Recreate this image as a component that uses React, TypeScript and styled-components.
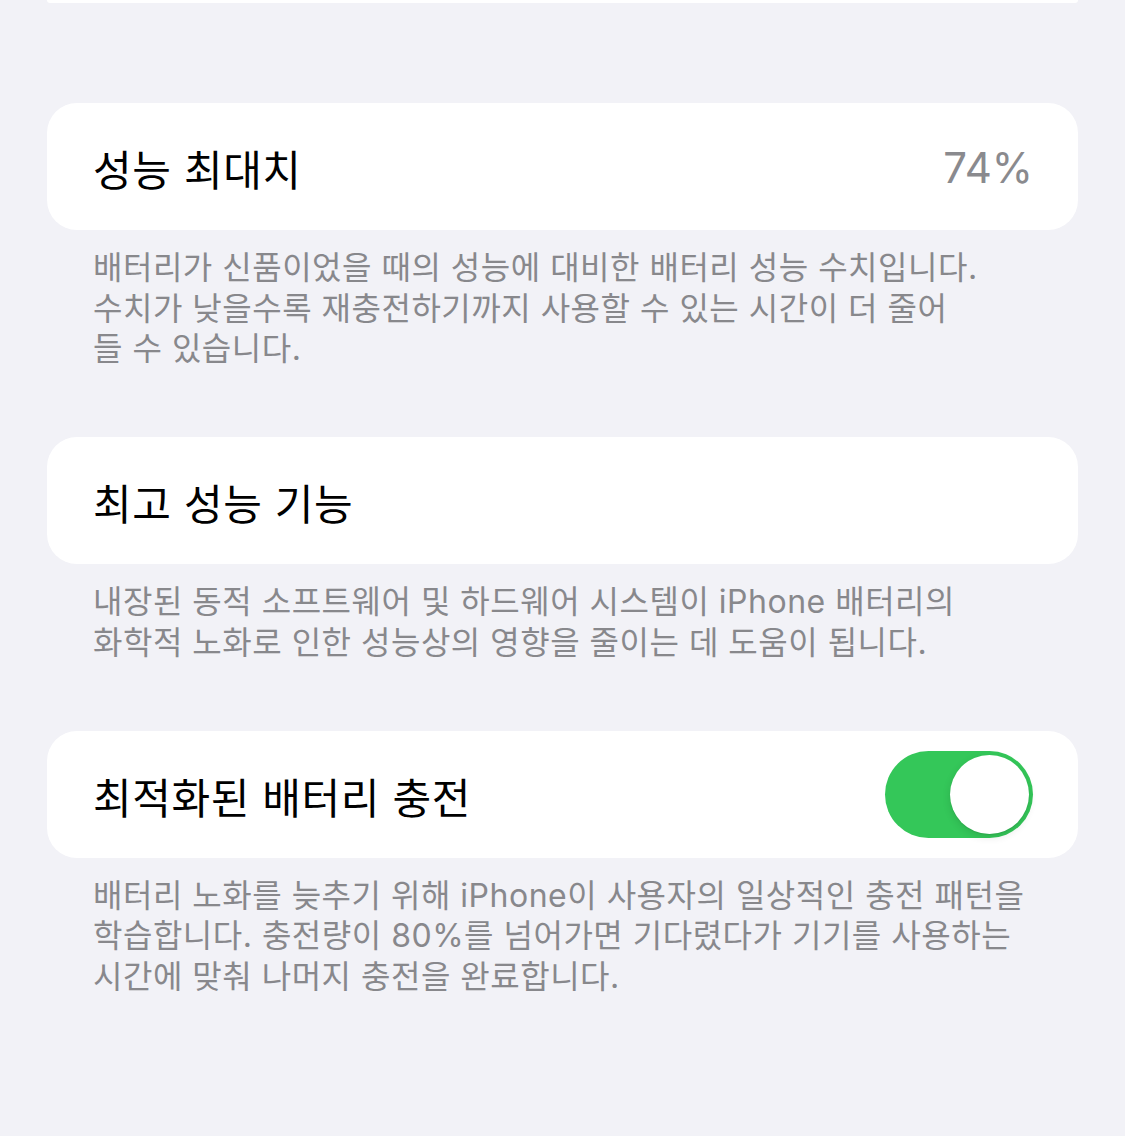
import React, { useState } from 'react';
import styled, { createGlobalStyle } from 'styled-components';

const colors = {
    background: '#f2f2f7',
    card: '#ffffff',
    label: '#000000',
    secondary: '#8a8a8e',
    footnote: '#88888c',
    green: '#34c759',
};

const GlobalStyle = createGlobalStyle`
    html, body {
        margin: 0;
        padding: 0;
        background: ${colors.background};
    }
    body {
        font-family: Inter, "Noto Sans CJK KR", sans-serif;
        -webkit-font-smoothing: antialiased;
    }
`;

const Page = styled.div`
    width: 1125px;
    height: 1136px;
    overflow: hidden;
    padding: 0 47px;
    box-sizing: border-box;
    display: flex;
    flex-direction: column;
`;

const TopCard = styled.div`
    height: 3px;
    margin-bottom: 100px;
    background: ${colors.card};
    border-radius: 0 0 30px 30px;
`;

const Section = styled.section`
    display: flex;
    flex-direction: column;
    margin-bottom: 67.5px;
`;

const Card = styled.div`
    height: 127px;
    background: ${colors.card};
    border-radius: 30px;
    padding: 0 45px 0 46px;
    display: flex;
    align-items: center;
    justify-content: space-between;
`;

const Title = styled.div`
    color: ${colors.label};
    font-size: 42px;
    letter-spacing: 0.6px;
    padding-top: 2px;
`;

const Value = styled.div`
    color: ${colors.secondary};
    font-size: 42px;
    padding-top: 2px;
`;

const Footnote = styled.p`
    margin: 0;
    padding: 18px 46px 0;
    color: ${colors.footnote};
    font-size: 32px;
    line-height: 40.5px;
    letter-spacing: 0.5px;
`;

const Switch = styled.button<{ $on: boolean }>`
    width: 148px;
    height: 87px;
    padding: 0;
    border: 0;
    border-radius: 44px;
    background: ${(p) => (p.$on ? colors.green : '#e9e9eb')};
    position: relative;
    cursor: pointer;
    flex-shrink: 0;
`;

const Knob = styled.span<{ $on: boolean }>`
    position: absolute;
    top: 4px;
    left: ${(p) => (p.$on ? '65px' : '4px')};
    width: 79px;
    height: 79px;
    border-radius: 50%;
    background: #ffffff;
    box-shadow: 0 3px 8px rgba(0, 0, 0, 0.12), 0 1px 1px rgba(0, 0, 0, 0.08);
    transition: left 0.2s;
`;

export default function App() {
    const [optimized, setOptimized] = useState<boolean>(true);
    return (
        <>
            <GlobalStyle />
            <Page>
                <TopCard />
                <Section>
                    <Card>
                        <Title>성능 최대치</Title>
                        <Value>74%</Value>
                    </Card>
                    <Footnote>
                        배터리가 신품이었을 때의 성능에 대비한 배터리 성능 수치입니다.
                        <br />
                        수치가 낮을수록 재충전하기까지 사용할 수 있는 시간이 더 줄어
                        <br />들 수 있습니다.
                    </Footnote>
                </Section>
                <Section>
                    <Card>
                        <Title>최고 성능 기능</Title>
                    </Card>
                    <Footnote>
                        내장된 동적 소프트웨어 및 하드웨어 시스템이 iPhone 배터리의
                        <br />
                        화학적 노화로 인한 성능상의 영향을 줄이는 데 도움이 됩니다.
                    </Footnote>
                </Section>
                <Section>
                    <Card>
                        <Title>최적화된 배터리 충전</Title>
                        <Switch $on={optimized} onClick={() => setOptimized(!optimized)}>
                            <Knob $on={optimized} />
                        </Switch>
                    </Card>
                    <Footnote>
                        배터리 노화를 늦추기 위해 iPhone이 사용자의 일상적인 충전 패턴을
                        <br />
                        학습합니다. 충전량이 80%를 넘어가면 기다렸다가 기기를 사용하는
                        <br />
                        시간에 맞춰 나머지 충전을 완료합니다.
                    </Footnote>
                </Section>
            </Page>
        </>
    );
}
